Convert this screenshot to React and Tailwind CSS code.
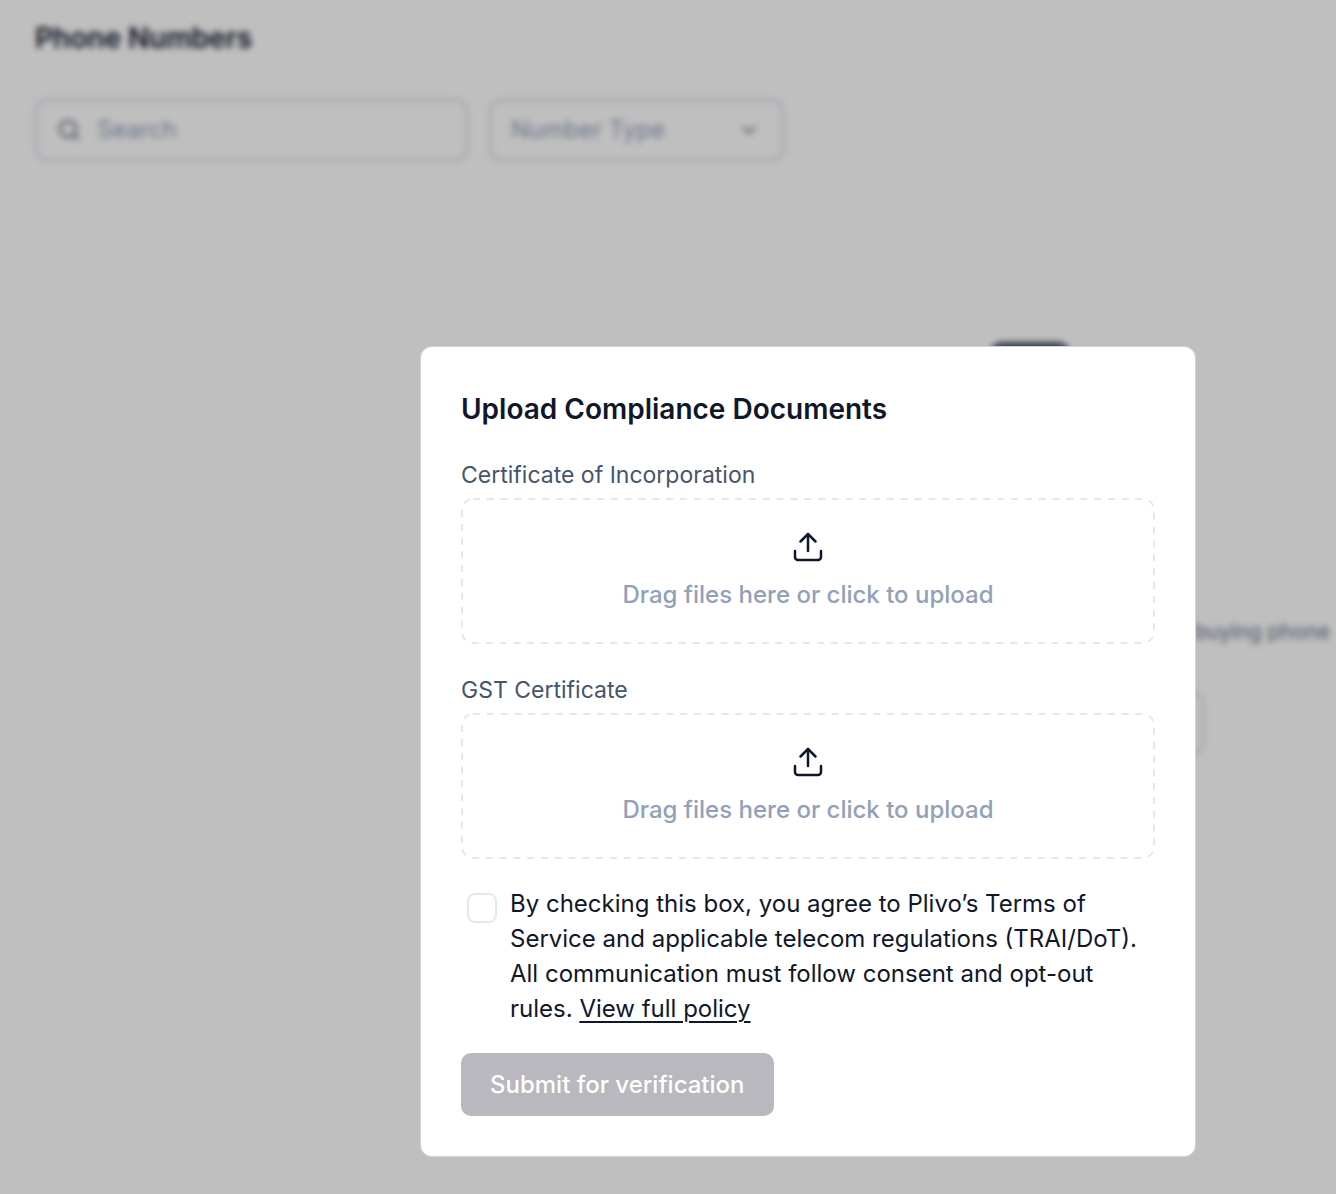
import { ChevronDown, Search } from "lucide-react";

function UploadIcon() {
  return (
    <svg
      viewBox="0 0 32 32"
      className="size-8 text-slate-900"
      fill="none"
      stroke="currentColor"
      strokeWidth="2.5"
      strokeLinecap="round"
      strokeLinejoin="round"
      aria-hidden="true"
    >
      <path d="M3 20v6a3 3 0 0 0 3 3h20a3 3 0 0 0 3-3v-6" />
      <path d="M16 20V3" />
      <path d="M8.5 10.5 16 3l7.5 7.5" />
    </svg>
  );
}

/* Dashed outline with longer dashes than the browser's own border style. */
function DashedOutline() {
  return (
    <svg className="pointer-events-none absolute inset-0 size-full overflow-visible text-slate-200" fill="none" aria-hidden="true">
      <rect
        x="1"
        y="1"
        rx="11"
        className="h-[calc(100%-2px)] w-[calc(100%-2px)]"
        stroke="currentColor"
        strokeWidth="2"
        strokeDasharray="7 6.8"
      />
    </svg>
  );
}

function UploadField({ id, label }) {
  return (
    <div className="flex flex-col gap-2">
      <label htmlFor={id} className="self-start text-[23px] leading-[30px] text-slate-600">
        {label}
      </label>
      <label className="relative flex h-[146px] cursor-pointer flex-col items-center justify-center gap-4 rounded-xl">
        <DashedOutline />
        <UploadIcon />
        <span className="text-2xl leading-8 font-medium text-slate-400">Drag files here or click to upload</span>
        <input id={id} type="file" className="sr-only" />
      </label>
    </div>
  );
}

function PhoneNumbersPage() {
  return (
    <main className="px-[35px] pt-[18px]">
      <h1 className="text-[28px] leading-10 font-semibold text-slate-900">Phone Numbers</h1>
      <div className="mt-[41px] flex gap-[21px]">
        <div className="flex h-[62px] w-[433px] items-center gap-4 rounded-xl border-2 border-slate-300 px-5">
          <Search className="size-6 shrink-0 text-gray-500" strokeWidth={2.5} />
          <input
            type="search"
            aria-label="Search"
            placeholder="Search"
            className="min-w-0 flex-1 text-2xl outline-none placeholder:text-slate-400"
          />
        </div>
        <div className="relative w-[295px]">
          <select
            aria-label="Number Type"
            className="h-[62px] w-full appearance-none rounded-xl border-2 border-slate-300 px-5 text-2xl text-slate-400"
          >
            <option>Number Type</option>
          </select>
          <ChevronDown className="pointer-events-none absolute top-[19px] right-[23px] size-6 text-slate-500" />
        </div>
      </div>
      <section className="mt-[181px] -mr-[29px] ml-auto flex w-[600px] flex-col items-center">
        <div className="size-20 rounded-xl bg-gray-600" />
        <p className="mt-[194px] self-end text-[21px] leading-8 text-slate-500">buying phone</p>
        <div className="mt-[43px] h-16 w-[348px] rounded-xl border-2 border-slate-300" />
      </section>
    </main>
  );
}

function ComplianceDialog() {
  return (
    <div
      role="dialog"
      aria-modal="true"
      aria-labelledby="dialog-title"
      className="w-full max-w-[776px] rounded-xl border border-slate-300 bg-white px-10 pt-[42px] pb-10"
    >
      <h2 id="dialog-title" className="text-[28px] leading-10 font-semibold text-slate-900">
        Upload Compliance Documents
      </h2>
      <form className="mt-[31px]" onSubmit={(e) => e.preventDefault()}>
        <div className="flex flex-col gap-[31px]">
          <UploadField id="incorporation" label="Certificate of Incorporation" />
          <UploadField id="gst" label="GST Certificate" />
        </div>
        <div className="mt-[27px] flex items-start gap-[13px] pl-1.5">
          <input
            id="agree"
            type="checkbox"
            className="mt-[7px] size-[30px] shrink-0 appearance-none rounded-lg border-2 border-slate-200 checked:bg-slate-900"
          />
          <p className="text-2xl leading-[35px] text-slate-900">
            <label htmlFor="agree">
              By checking this box, you agree to Plivo’s Terms of Service and applicable telecom
              regulations (TRAI/DoT). All communication must follow consent and opt-out rules.
            </label>{" "}
            <a href="#policy" className="underline decoration-2 underline-offset-4">
              View full policy
            </a>
          </p>
        </div>
        <button
          type="submit"
          disabled
          className="mt-[27px] h-[63px] rounded-[10px] bg-[#b8b8be] px-[29px] text-2xl font-medium text-white"
        >
          Submit for verification
        </button>
      </form>
    </div>
  );
}

export default function App() {
  return (
    <div className="relative min-h-screen overflow-hidden bg-white font-['Inter',sans-serif] [font-optical-sizing:none]">
      <PhoneNumbersPage />
      <div className="fixed inset-0 flex items-end justify-end bg-black/25 pr-[140px] pb-[37px] backdrop-blur-[3px]">
        <ComplianceDialog />
      </div>
    </div>
  );
}
